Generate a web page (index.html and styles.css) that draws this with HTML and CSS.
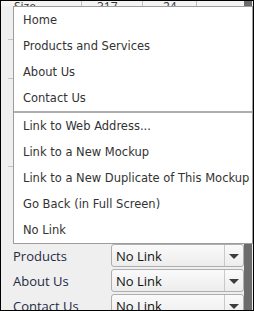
FILE: index.html
```html
<!DOCTYPE html>
<html lang="en">
  <head>
    <meta charset="UTF-8">
    <title>Link Menu</title>
    <link rel="stylesheet" href="styles.css">
  </head>
  <body>
    <div class="frame">
      <div class="panel">
        <div class="head-row">
          <span class="cell">Size</span>
          <span class="cell">317</span>
          <span class="cell">24</span>
          <span class="cell"></span>
        </div>
        <div class="filler a"></div>
        <div class="filler b"></div>
        <div class="filler c"></div>
        <div class="filler d"></div>
        <div class="link-row">
          <span class="label">Products</span>
          <div class="select"><span class="value">No Link</span><span class="arrow"></span></div>
        </div>
        <div class="link-row">
          <span class="label">About Us</span>
          <div class="select"><span class="value">No Link</span><span class="arrow"></span></div>
        </div>
        <div class="link-row">
          <span class="label">Contact Us</span>
          <div class="select"><span class="value">No Link</span><span class="arrow"></span></div>
        </div>
      </div>
      <div class="scrollbar"></div>

      <ul class="menu">
        <li>Home</li>
        <li>Products and Services</li>
        <li>About Us</li>
        <li>Contact Us</li>
        <li class="sep"></li>
        <li>Link to Web Address...</li>
        <li>Link to a New Mockup</li>
        <li>Link to a New Duplicate of This Mockup</li>
        <li>Go Back (in Full Screen)</li>
        <li>No Link</li>
      </ul>
    </div>
  </body>
</html>
```

FILE: styles.css
```css
*{box-sizing:border-box}
body{margin:0;background:#fff}
.frame{position:relative;width:254px;height:311px;border:1px solid #000;background:#efefef;display:flex;padding-right:1px;overflow:hidden;font-family:"Open Sans","DejaVu Sans",sans-serif}
.panel{flex:1;display:flex;flex-direction:column;min-width:0;overflow:hidden}
.scrollbar{width:8px;background:#6c6c6c}

.head-row{height:5px;flex:none;overflow:hidden;display:grid;grid-template-columns:81px 61px 54px 1fr;background:#f4f4f4}
.cell{border-right:1px solid #bdbdbd;font-size:12px;line-height:12px;color:#333;padding-left:13px}
.cell:nth-child(2){padding-left:15px}
.cell:nth-child(3){padding-left:20px}
.cell:last-child{border-right:none}

.filler{margin-left:7px;border-bottom:1px solid #c4c4c4;flex:none}
.filler.a{height:34px}
.filler.b{height:39px}
.filler.c{height:88px}
.filler.d{height:76px;border-bottom:none}

.link-row{height:25px;display:flex;align-items:center;flex:none}
.label{width:110px;padding-left:12px;font-size:13px;color:#1f2b45}
.select{width:133px;height:23px;display:flex;align-items:center;border:1px solid #aeaeae;border-radius:3px;background:linear-gradient(#fafafa,#ededed)}
.value{flex:1;padding-left:4px;font-size:13px;color:#111}
.arrow{width:19px;height:100%;border-left:1px solid #c9c9c9;display:flex;align-items:center;justify-content:center}
.arrow::before{content:"";border-left:5px solid transparent;border-right:5px solid transparent;border-top:5px solid #3c3c3c;margin-top:2px}

.menu{position:absolute;left:12px;top:5px;width:240px;height:238px;margin:0;padding:0;list-style:none;background:#fff;border:1px solid #9c9c9c;font-family:"DejaVu Sans",sans-serif;font-size:11.5px;color:#333}
.menu li{height:26px;line-height:27px;padding-left:9px;white-space:nowrap}
.menu li.sep{height:2px;background:#aeaeae}
```
